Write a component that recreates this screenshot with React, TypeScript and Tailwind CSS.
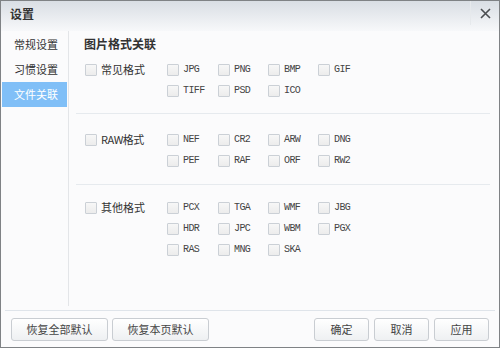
import { useState } from "react";

const cjk = "font-['Noto_Sans_CJK_SC','Noto_Sans',sans-serif]";
const mono = "font-['Liberation_Mono','DejaVu_Sans_Mono',monospace]";

const groups = [
  { name: "常见格式", mono: false, items: ["JPG", "PNG", "BMP", "GIF", "TIFF", "PSD", "ICO"] },
  { name: "RAW格式", mono: true, items: ["NEF", "CR2", "ARW", "DNG", "PEF", "RAF", "ORF", "RW2"] },
  { name: "其他格式", mono: false, items: ["PCX", "TGA", "WMF", "JBG", "HDR", "JPC", "WBM", "PGX", "RAS", "MNG", "SKA"] },
];

function Box({ on, toggle }: { on: boolean; toggle: () => void }) {
  return (
    <span
      onClick={toggle}
      className="w-[12px] h-[12px] shrink-0 border border-[#cbd0d6] rounded-[1px] bg-gradient-to-b from-[#f7f7f7] to-[#ececec] flex items-center justify-center text-[9px] leading-none text-[#333]"
    >
      {on ? "✓" : ""}
    </span>
  );
}

export default function App() {
  const [tab, setTab] = useState(2);
  const [checked, setChecked] = useState<Record<string, boolean>>({});
  const flip = (k: string) => setChecked((c) => ({ ...c, [k]: !c[k] }));
  const tabs = ["常规设置", "习惯设置", "文件关联"];

  return (
    <div className={`w-[500px] h-[348px] border border-[#7f8285] bg-[#fbfbfc] flex flex-col text-[#333] ${cjk}`}>
      <div className="h-[30px] shrink-0 flex justify-between bg-gradient-to-b from-[#d9dee4] to-[#f7f8fa]">
        <span className="pl-[9px] pt-[4px] text-[12px] font-bold">设置</span>
        <button className="w-[29px] h-[24px] border-l border-[#e6e9ec] flex items-center justify-center">
          <svg width="11" height="11" viewBox="0 0 11 11">
            <path d="M1 1L10 10M10 1L1 10" stroke="#4a4d50" strokeWidth="1.6" />
          </svg>
        </button>
      </div>

      <div className="flex flex-1 pb-[4px]">
        <div className="w-[68px] shrink-0 border-r border-[#e3e5e8] pt-[1px] flex flex-col">
          {tabs.map((t, i) => (
            <div
              key={t}
              onClick={() => setTab(i)}
              className={`h-[25px] mx-[1px] pl-[12px] flex items-center text-[11px] ${
                tab === i ? "bg-[#80bff7] text-white" : "text-[#333]"
              }`}
            >
              {t}
            </div>
          ))}
        </div>

        <div className="flex-1 pl-[7px] pr-[9px]">
          <div className="h-[16px] mt-[5px] pl-[8px] text-[12px] font-bold leading-[16px]">图片格式关联</div>
          {groups.map((g, gi) => (
            <div
              key={g.name}
              className={`flex ${gi === 0 ? "pt-[7px] pb-[12px]" : gi === 1 ? "pt-[15px] pb-[13px]" : "pt-[12px]"} ${
                gi < 2 ? "border-b border-[#e6eaee]" : ""
              }`}
            >
              <div className="w-[91px] pl-[9px] h-[21px] flex items-center gap-[4px] text-[11px]">
                <Box on={!!checked[g.name]} toggle={() => flip(g.name)} />
                <span className={g.mono ? "tracking-[-0.5px]" : ""}>{g.name}</span>
              </div>
              <div className="grid grid-cols-[51px_50px_50px_50px] auto-rows-[21px]">
                {g.items.map((f) => (
                  <div key={f} className="flex items-center gap-[4px]">
                    <Box on={!!checked[f]} toggle={() => flip(f)} />
                    <span className={`${mono} text-[10px] tracking-[-0.6px] text-[#444]`}>{f}</span>
                  </div>
                ))}
              </div>
            </div>
          ))}
        </div>
      </div>

      <div className="mx-[4px] border-t border-[#dfe4ea] h-[37px] shrink-0 flex items-start pt-[7px] px-[6px] gap-[4px]">
        {["恢复全部默认", "恢复本页默认"].map((b) => (
          <button
            key={b}
            className="w-[97px] h-[23px] border border-[#c9cdd2] rounded-[3px] bg-gradient-to-b from-white to-[#eef0f2] text-[11px] text-[#444]"
          >
            {b}
          </button>
        ))}
        <div className="flex-1" />
        {["确定", "取消", "应用"].map((b, i) => (
          <button
            key={b}
            className={`w-[55px] h-[23px] border border-[#c9cdd2] rounded-[3px] bg-gradient-to-b from-white to-[#eef0f2] text-[11px] text-[#444] ${
              i > 0 ? "ml-[1px]" : ""
            }`}
          >
            {b}
          </button>
        ))}
      </div>
    </div>
  );
}
